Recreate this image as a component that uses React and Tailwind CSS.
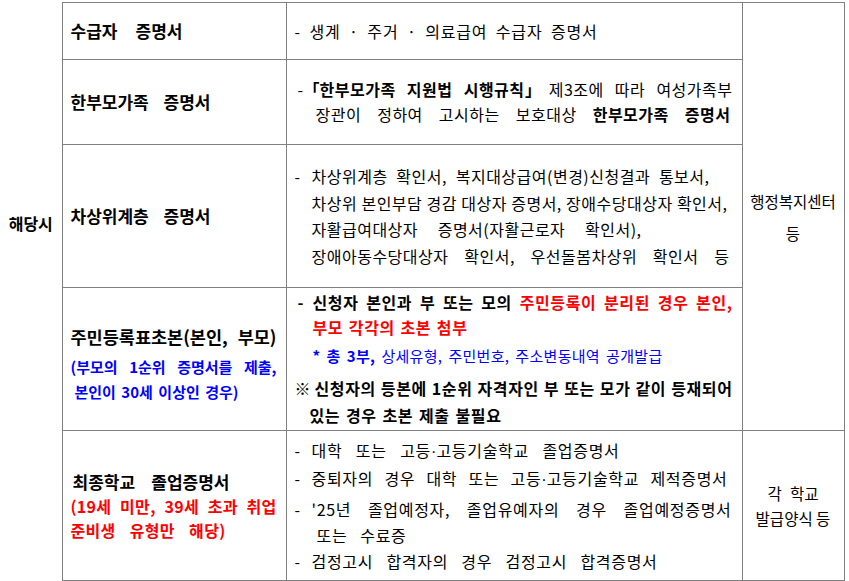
import React from "react";

const FONT = { fontFamily: '"Noto Sans CJK KR", "Noto Sans", sans-serif' };
const LINE = "border border-[#808080]";

// one justified line of fixed width, so the breaks fall where the reference has them
const J = ({ w, className = "", children }) => (
  <div className={`${w} text-justify [text-align-last:justify] ${className}`}>{children}</div>
);

const Dash = ({ className = "w-[17px]" }) => <span className={`${className} shrink-0`}>-</span>;

// narrow middle dot, as in 고등·고등기술학교
const Dot = () => <span className="font-['Liberation_Sans'] tracking-normal">·</span>;

const App = () => {
  return (
    <div className="w-[849px] h-[581px] bg-white text-black overflow-hidden pt-[2px]" style={FONT}>
      <table className="border-collapse table-fixed w-[844px]">
        <colgroup>
          <col className="w-[62px]" />
          <col className="w-[224px]" />
          <col className="w-[456px]" />
          <col className="w-[102px]" />
        </colgroup>
        <tbody>
          <tr>
            <td
              rowSpan={5}
              className="align-top text-center font-bold text-[16px] leading-[24px] pt-[208px] border-r border-[#808080]"
            >
              해당시
            </td>
            <td className={`h-[57px] ${LINE} pl-[8px] font-bold text-[17px] leading-[26px]`}>
              <J w="w-[112px]">수급자 증명서</J>
            </td>
            <td className={`${LINE} pl-[8px] text-[16px] tracking-[0.8px] leading-[26px]`}>
              <div className="flex">
                <Dash className="w-[15px]" />
                <J w="w-[288px]">생계 · 주거 · 의료급여 수급자 증명서</J>
              </div>
            </td>
            <td rowSpan={4} className={`${LINE} text-center text-[15.5px] leading-[32px]`}>
              행정복지센터
              <br />등
            </td>
          </tr>
          <tr>
            <td className={`h-[85px] ${LINE} pl-[8px] font-bold text-[17px] leading-[26px]`}>
              <J w="w-[140px]">한부모가족 증명서</J>
            </td>
            <td className={`${LINE} pl-[11px] text-[16px] tracking-[0.5px] leading-[25px]`}>
              <div className="flex">
                <Dash className="w-[6px]" />
                <J w="w-[429px]">
                  <span className="font-bold">
                    <span className="tracking-[-7px]">「</span>한부모가족 지원법 시행규
                    <span className="tracking-[-6px]">칙</span>」
                  </span>
                  제3조에 따라 여성가족부
                </J>
              </div>
              <J w="w-[415px]" className="ml-[18px]">
                장관이 정하여 고시하는 보호대상 <span className="font-bold">한부모가족 증명서</span>
              </J>
            </td>
          </tr>
          <tr>
            <td className={`h-[143px] ${LINE} pl-[8px] font-bold text-[17px] leading-[26px]`}>
              <J w="w-[140px]">차상위계층 증명서</J>
            </td>
            <td className={`${LINE} pl-[8px] text-[16px] tracking-[0.5px] leading-[26.5px]`}>
              <div className="flex">
                <Dash />
                <J w="w-[398px]">차상위계층 확인서, 복지대상급여(변경)신청결과 통보서,</J>
              </div>
              <J w="w-[416px]" className="ml-[17px]">
                차상위 본인부담 경감 대상자 증명서, 장애수당대상자 확인서,
              </J>
              <J w="w-[330px]" className="ml-[17px]">
                자활급여대상자 증명서(자활근로자 확인서),
              </J>
              <J w="w-[418px]" className="ml-[17px]">
                장애아동수당대상자 확인서, 우선돌봄차상위 확인서 등
              </J>
            </td>
          </tr>
          <tr>
            <td className={`h-[143px] ${LINE} pl-[8px] pt-[6px]`}>
              <J w="w-[206px]" className="font-bold text-[17.5px] leading-[30px]">
                주민등록표초본(본인, 부모)
              </J>
              <J w="w-[206px]" className="font-bold text-[#0000ff] text-[15px] leading-[30px]">
                (부모의 1순위 증명서를 제출,
              </J>
              <J w="w-[164px]" className="ml-[4px] font-bold text-[#0000ff] text-[15px] leading-[20px]">
                본인이 30세 이상인 경우)
              </J>
            </td>
            <td className={`${LINE} pl-[8px] font-bold text-[16px] tracking-[0.6px]`}>
              <div className="flex leading-[25px]">
                <Dash className="w-[18px] pl-[3px]" />
                <J w="w-[420px]">
                  신청자 본인과 부 또는 모의{" "}
                  <span className="text-[#ff0000]">주민등록이 분리된 경우 본인,</span>
                </J>
              </div>
              <J w="w-[155px]" className="ml-[18px] leading-[25px] text-[#ff0000]">
                부모 각각의 초본 첨부
              </J>
              <J w="w-[350px]" className="ml-[18px] leading-[31px] text-[15px] tracking-[0.3px] text-[#0000ff]">
                * 총 3부, <span className="font-normal">상세유형, 주민번호, 주소변동내역 공개발급</span>
              </J>
              <div className="flex leading-[27px] mt-[4px]">
                <span className="w-[20px] shrink-0">※</span>
                <J w="w-[418px]">신청자의 등본에 1순위 자격자인 부 또는 모가 같이 등재되어</J>
              </div>
              <J w="w-[192px]" className="ml-[15px] leading-[27px]">
                있는 경우 초본 제출 불필요
              </J>
            </td>
          </tr>
          <tr>
            <td className={`h-[150px] ${LINE} pl-[8px]`}>
              <J w="w-[157px]" className="ml-[2px] font-bold text-[17px] leading-[25px]">
                최종학교 졸업증명서
              </J>
              <J w="w-[206px]" className="font-bold text-[#ff0000] text-[16px] tracking-[0.3px] leading-[25px]">
                (19세 미만, 39세 초과 취업
              </J>
              <J w="w-[155px]" className="font-bold text-[#ff0000] text-[16px] tracking-[0.3px] leading-[23px]">
                준비생 유형만 해당)
              </J>
            </td>
            <td className={`${LINE} pl-[8px] text-[16px] tracking-[0.7px] leading-[26px]`}>
              <div className="flex">
                <Dash />
                <J w="w-[308px]">
                  대학 또는 고등<Dot />고등기술학교 졸업증명서
                </J>
              </div>
              <div className="flex">
                <Dash />
                <J w="w-[416px]">
                  중퇴자의 경우 대학 또는 고등<Dot />고등기술학교 제적증명서
                </J>
              </div>
              <div className="flex mt-[3px]">
                <Dash />
                <J w="w-[420px]">'25년 졸업예정자, 졸업유예자의 경우 졸업예정증명서</J>
              </div>
              <J w="w-[90px]" className="ml-[22px]">
                또는 수료증
              </J>
              <div className="flex">
                <Dash />
                <J w="w-[346px]">검정고시 합격자의 경우 검정고시 합격증명서</J>
              </div>
            </td>
            <td className={`${LINE} text-center text-[15.5px] leading-[25px]`}>
              <div className="flex justify-center">
                <J w="w-[51px]">각 학교</J>
              </div>
              발급양식 등
            </td>
          </tr>
        </tbody>
      </table>
    </div>
  );
};

export default App;
